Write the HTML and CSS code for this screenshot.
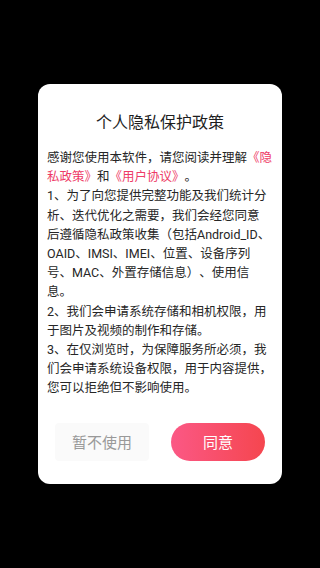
FILE: index.html
```html
<!DOCTYPE html>
<html lang="zh-CN">
<head>
<meta charset="utf-8">
<link rel="stylesheet" href="styles.css">
</head>
<body>
<div class="screen">
  <div class="dialog">
    <h1 class="title">个人隐私保护政策</h1>
    <div class="content">
      <p>感谢您使用本软件，请您阅读并理解<span class="link">《隐<br>私政策》</span>和<span class="link">《用户协议》</span>。</p>
      <p>1、为了向您提供完整功能及我们统计分<br>析、迭代优化之需要，我们会经您同意<br>后遵循隐私政策收集（包括Android_ID、<br>OAID、IMSI、IMEI、位置、设备序列<br>号、MAC、外置存储信息）、使用信<br>息。</p>
      <p>2、我们会申请系统存储和相机权限，用<br>于图片及视频的制作和存储。</p>
      <p>3、在仅浏览时，为保障服务所必须，我<br>们会申请系统设备权限，用于内容提供，<br>您可以拒绝但不影响使用。</p>
    </div>
    <div class="actions">
      <button class="btn btn-cancel">暂不使用</button>
      <button class="btn btn-ok">同意</button>
    </div>
  </div>
</div>
</body>
</html>
```

FILE: styles.css
```css
* { box-sizing: border-box; }
html, body {
  margin: 0;
  padding: 0;
  background: #000;
}
body {
  font-family: Roboto, "Noto Sans CJK SC", sans-serif;
}
.screen {
  width: 320px;
  height: 568px;
  display: flex;
  align-items: center;
  justify-content: center;
}
.dialog {
  width: 244px;
  height: 400px;
  background: #fff;
  border-radius: 12px;
  padding: 28px 8px 0;
  display: flex;
  flex-direction: column;
}
.title {
  margin: 0;
  font-size: 16px;
  line-height: 22px;
  font-weight: 400;
  color: #1e1e1e;
  text-align: center;
}
.content {
  margin-top: 14px;
  padding: 0 1px;
  color: #262626;
  font-size: 12.5px;
  line-height: 19.2px;
  white-space: nowrap;
  text-spacing-trim: space-all;
}
.content p {
  margin: 0;
}
.link {
  color: #ee3b67;
}
.actions {
  margin-top: 25px;
  display: flex;
  justify-content: center;
  gap: 22px;
}
.btn {
  width: 94px;
  height: 38px;
  border: none;
  border-radius: 19px;
  font-family: Roboto, "Noto Sans CJK SC", sans-serif;
  font-size: 15px;
  padding: 0;
}
.btn-cancel {
  background: #fafafa;
  color: #999;
  border-radius: 4px;
}
.btn-ok {
  background: linear-gradient(90deg, #fb5885, #f5464f);
  color: #fff;
}
```
